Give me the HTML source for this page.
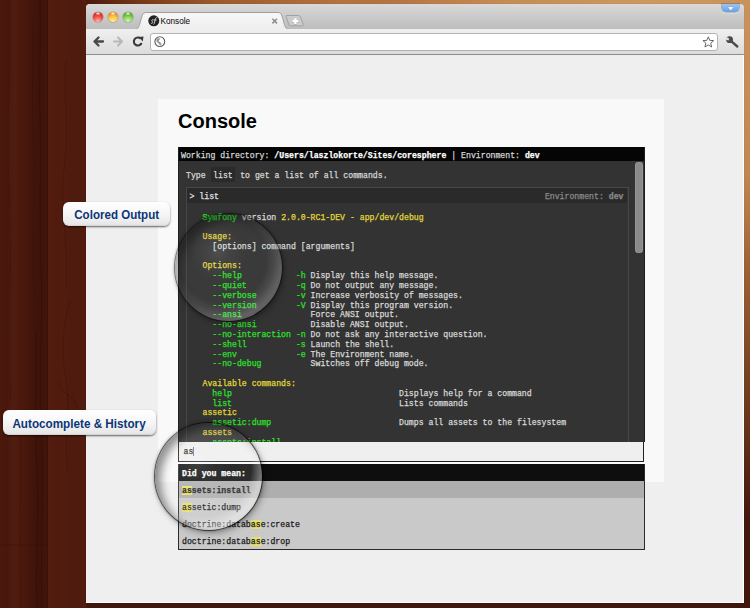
<!DOCTYPE html>
<html><head><meta charset="utf-8">
<style>
*{margin:0;padding:0;box-sizing:border-box}
html,body{width:750px;height:608px;overflow:hidden}
body{position:relative;background:#40180a;font-family:"Liberation Sans",sans-serif}
.a{position:absolute}
.wood{left:0;top:0;width:750px;height:608px;
 background:
  radial-gradient(ellipse 580px 560px at 660px -30px, rgba(208,154,98,1) 0%, rgba(192,134,80,1) 40%, rgba(150,92,50,1) 58%, rgba(112,60,30,.9) 80%, rgba(64,21,11,0) 100%),
  linear-gradient(90deg,rgba(0,0,0,0) 0,rgba(0,0,0,.05) 6px,rgba(255,255,255,.02) 14px,rgba(0,0,0,0) 22px,rgba(0,0,0,.12) 32px,rgba(0,0,0,.2) 40px,rgba(0,0,0,.12) 47px,rgba(0,0,0,0) 48px,rgba(0,0,0,.03) 58px,rgba(0,0,0,0) 64px,rgba(0,0,0,.06) 72px,rgba(0,0,0,0) 86px),
  linear-gradient(90deg,#4c180c 0,#4c180c 47px,#521c0e 48px,#521c0e 86px,#40150b 87px,#40150b 750px);}
.win{left:86px;top:4px;width:658px;height:599px;border-radius:4px 4px 0 0;background:#efefef;box-shadow:0 0 1px rgba(0,0,0,.3)}
.tabstrip{left:86px;top:4px;width:658px;height:25px;border-radius:4px 4px 0 0;background:linear-gradient(#d9d9d9,#bdbdbd)}
.light{width:10px;height:10px;border-radius:50%;top:11.5px}
.toolbar{left:86px;top:29px;width:658px;height:26px;background:linear-gradient(#f0f0f0,#dcdcdc);border-bottom:1px solid #8d8d8d}
.content{left:86px;top:55px;width:658px;height:548px;background:#efefef;border-right:1px solid #fff;border-bottom:1px solid #fff}
.card{left:158px;top:99px;width:506px;height:383px;background:#f9f9f9}
h1{position:absolute;left:178px;top:109px;font-size:20px;font-weight:bold;color:#000;line-height:24px}
.mono{font-family:"Liberation Mono",monospace;font-size:8.2px;white-space:pre;-webkit-text-stroke:0.25px currentColor}
.console{left:178px;top:147px;width:467px;height:295px;background:#333;overflow:hidden;border-left:1px solid #1e1e1e;border-right:1px solid #1e1e1e}
.chead{left:0;top:0;width:467px;height:14px;background:#050505;color:#d4d4d4;line-height:14px;padding-left:2px;padding-top:2px}
.chead b{color:#fff}
.inner{left:6.5px;top:40px;width:443px;height:300px;border:1.5px solid #474747;background:#333}
.ihead{left:0;top:0;width:440px;height:15px;background:#2a2a2a;color:#e0e0e0;line-height:15px;padding-top:1px}
.lines{left:16px;top:24.5px;line-height:9.8px;color:#d8d8d8}
.g{color:#2ae02a}.y{color:#e0d838}
.thumb{left:456px;top:15px;width:8px;height:91px;background:#8a8a8a;border-radius:2.5px;border:1px solid #959595}
.input{left:178px;top:442px;width:466px;height:20px;background:#efefef;border:1px solid #222;border-top:none}
.ac{left:178px;top:464px;width:467px;height:86px;background:#c9c9c9;border:1px solid #2a2a2a;border-top:none;overflow:hidden}
.achead{left:0;top:0;width:467px;height:17px;background:#0e0e0e;color:#fff;font-weight:bold;line-height:17px;padding-left:3px;padding-top:1px}
.row{left:0;width:466px;height:17px;line-height:17px;padding-left:3px;color:#1a1a1a;padding-top:1px}
.hl{background:#e8df6c;box-shadow:0 0 0 0.01px #e8df6c}
.pill{background:linear-gradient(#ffffff 0,#f6f6f6 50%,#e4e4e4 100%);border-radius:6px;box-shadow:0 1px 2px rgba(0,0,0,.6),inset 0 -1px 1px rgba(0,0,0,.08);color:#0b3677;font-weight:bold;font-size:13px;text-align:center}
.mag{border-radius:50%}
</style></head><body>
<div class="a wood"></div>
<svg class="a" style="left:0;top:0" width="86" height="608">
 <g fill="none" stroke="#1e0602" stroke-opacity=".25" stroke-width="0.8" opacity=".7">
  <path d="M40 0 C41 40 38 80 40 120 C42 160 39 200 41 260 C43 320 39 380 42 440 C44 500 40 560 42 608"/>
  <path d="M33 20 C34 60 31 90 33 130 C35 170 32 230 34 300"/>
  <path d="M36 330 C37 380 34 420 37 470 C39 520 35 570 37 608" stroke-opacity=".5"/>
  <path d="M9 0 C10 60 7 120 9 200 C11 260 8 330 10 400"/>
  <path d="M20 420 C22 470 19 520 21 608" stroke-opacity=".25"/>
  <path d="M66 60 C62 90 70 130 64 170 C60 200 68 240 66 290" stroke-opacity=".3"/>
  <path d="M70 300 C64 320 60 350 66 380 C72 410 62 440 68 470" stroke-opacity=".35"/>
  <path d="M58 380 C64 400 72 390 78 410" stroke-opacity=".35"/>
  <path d="M0 545 L47 545" stroke-opacity=".25"/>
  <path d="M47.5 0 V608" stroke-opacity=".5" stroke-width="1"/>
 </g>
</svg>
<div class="a" style="left:86px;top:0;width:664px;height:5px;background:linear-gradient(90deg,#4a1a0c 0,#7a3c18 60px,#9c5a2c 130px,#b47440 260px,rgba(190,130,75,0) 420px)"></div>
<div class="a win"></div>
<div class="a tabstrip"></div>
<div class="a light" style="left:93.3px;top:12px;width:9.6px;height:9.6px;box-shadow:0 0 0 0.5px rgba(120,0,0,.35);background:radial-gradient(ellipse 3px 2px at 50% 14%,rgba(255,255,255,.95) 0,rgba(255,255,255,0) 100%),radial-gradient(circle at 50% 95%,#ffb8b0 0,#f5524a 45%,#d42a22 75%,#8e1410 100%)"></div>
<div class="a light" style="left:108.2px;top:12px;width:9.6px;height:9.6px;box-shadow:0 0 0 0.5px rgba(120,60,0,.35);background:radial-gradient(ellipse 3px 2px at 50% 14%,rgba(255,255,255,.95) 0,rgba(255,255,255,0) 100%),radial-gradient(circle at 50% 95%,#fff0a0 0,#fcc848 45%,#e8901c 75%,#a85a08 100%)"></div>
<div class="a light" style="left:123.2px;top:12px;width:9.6px;height:9.6px;box-shadow:0 0 0 0.5px rgba(0,80,0,.35);background:radial-gradient(ellipse 3px 2px at 50% 14%,rgba(255,255,255,.95) 0,rgba(255,255,255,0) 100%),radial-gradient(circle at 50% 95%,#d8f8b0 0,#8cd458 45%,#58a830 75%,#2a6e10 100%)"></div>
<!-- tab -->
<svg class="a" style="left:134px;top:12px" width="160" height="18">
 <defs><linearGradient id="tg" x1="0" y1="0" x2="0" y2="1"><stop offset="0" stop-color="#f8f8f8"/><stop offset="1" stop-color="#eeeeee"/></linearGradient></defs>
 <path d="M0 17.5 C4 17.5 5 15 6 11 L8 4 C9 1 10 0.5 13 0.5 L143 0.5 C146 0.5 147 1 148 4 L150 11 C151 15 152 17.5 156 17.5 Z" fill="url(#tg)" stroke="#a0a0a0" stroke-width="1"/>
 <rect x="1" y="17" width="154" height="2" fill="#efefef"/>
</svg>
<svg class="a" style="left:0;top:0" width="750" height="60">
 <path d="M286.5 15.5 L298.5 15.5 C299.5 15.5 300 16 300.4 17 L303.4 24.6 C303.6 25.4 303.3 25.8 302.5 25.8 L290.3 25.8 C289.6 25.8 289.2 25.4 289 24.8 L286 16.4 C285.8 15.8 286 15.5 286.5 15.5 Z" fill="#cbcbcb" stroke="#a2a2a2" stroke-width="1"/>
 <path d="M292.5 21.2 H298.3 M295.4 18.3 V24.1" stroke="#8a8a8a" stroke-width="2.2" transform="translate(0 0.6)" opacity=".5"/>
 <path d="M292.5 21.2 H298.3 M295.4 18.3 V24.1" stroke="#fff" stroke-width="2.2"/>
 <path d="M272.4 18.8 L277 23.4 M277 18.8 L272.4 23.4" stroke="#8c8c8c" stroke-width="1.5"/>
</svg>
<svg class="a" style="left:147.5px;top:15.2px" width="12" height="12">
 <circle cx="5.8" cy="5.8" r="5.5" fill="#222"/>
 <path d="M3 8.2 C4 8.6 5 8 4.6 7 C4.2 6.2 3.4 5.8 4 5 C4.5 4.4 5.4 4.6 5.6 5.1" stroke="#ddd" stroke-width=".9" fill="none"/>
 <path d="M5.6 9.4 C6.6 8.8 6.8 6 7.2 4.2 C7.5 3 8.3 2.4 9.2 2.8 M5.8 5 H8.6" stroke="#ddd" stroke-width=".9" fill="none"/>
</svg>
<div class="a" style="left:160.5px;top:16.5px;font-size:8.2px;color:#111;line-height:10px;-webkit-text-stroke:0.05px #111">Konsole</div>
<div class="a" style="left:722.3px;top:4px;width:16.5px;height:8.2px;border-radius:0 0 4px 4px;background:linear-gradient(#9cc4f4,#6aa0e4);box-shadow:0 0 0 0.6px rgba(50,80,120,.55),0 1px 0 0.5px rgba(255,255,255,.5)"></div>
<svg class="a" style="left:727px;top:6px" width="8" height="6"><path d="M0.8 1 H6.6 L3.7 4.4 Z" fill="#fff" stroke="#4a6a90" stroke-width=".3" stroke-opacity=".5"/></svg>
<div class="a toolbar"></div>
<!-- back fwd reload -->
<svg class="a" style="left:90px;top:35px" width="60" height="14">
 <path d="M4.5 6.5 H13 M4.5 6.5 L8.5 2.5 M4.5 6.5 L8.5 10.5" stroke="#484848" stroke-width="2.3" fill="none" stroke-linecap="round" stroke-linejoin="round"/>
 <path d="M24 6.5 H32 M32 6.5 L28 2.5 M32 6.5 L28 10.5" stroke="#b8b8b8" stroke-width="2.1" fill="none" stroke-linecap="round" stroke-linejoin="round"/>
 <path d="M50.6 3.6 A4 4 0 1 0 51.6 8" stroke="#3a3a3a" stroke-width="2.1" fill="none"/>
 <path d="M48.5 2 L53.5 1.5 L52.8 6.5 Z" fill="#3a3a3a"/>
</svg>
<div class="a" style="left:150px;top:33px;width:568px;height:18px;background:#fff;border:1px solid #b2b2b2;border-radius:3px"></div>
<svg class="a" style="left:0;top:0" width="200" height="60">
 <circle cx="159.8" cy="41.6" r="4.9" fill="#fff" stroke="#5a5a5a" stroke-width="1.1"/>
 <path d="M157 38.6 C158 38 160 38.3 160.4 39 C159.6 39.8 158.6 40 158.8 41 C159.2 42 160.2 42.2 161 43 C161.8 43.8 161.5 45 160.6 45.6 C159.6 45.4 159.2 44.4 158.6 43.6 C157.8 42.6 156.6 42.2 156.4 41 C156.3 40 156.5 39.2 157 38.6 Z" fill="#9a9a9a"/>
</svg>
<svg class="a" style="left:702px;top:35.5px" width="13" height="13">
 <path d="M6.3 0.8 L7.8 4.4 L11.7 4.6 L8.7 7.1 L9.7 11 L6.3 8.9 L2.9 11 L3.9 7.1 L0.9 4.6 L4.8 4.4 Z" fill="#fff" stroke="#6a6a6a" stroke-width="1" stroke-linejoin="round"/>
</svg>
<svg class="a" style="left:700px;top:30px" width="44" height="24">
 <path d="M31.2 11.2 L37.3 16.5" stroke="#4a4a4a" stroke-width="2.4" stroke-linecap="round"/>
 <circle cx="29.6" cy="9.7" r="3.4" fill="#4a4a4a"/>
 <path d="M25.6 6.6 L29.2 8.6 L28.6 10.6 L25.4 9.6 Z" fill="#e2e2e2"/>
</svg>
<div class="a content"></div>
<div class="a card"></div>
<h1>Console</h1>
<div class="a console mono">
 <div class="a chead">Working directory: <b>/Users/laszlokorte/Sites/coresphere</b> | Environment: <b>dev</b></div>
 <div class="a" style="left:7px;top:19px;color:#d8d8d8;line-height:15px;padding-top:2px">Type <span style="display:inline-block;background:#2a2a2a;padding:0 2.5px;height:15px;vertical-align:top;margin-top:-1px;line-height:15px;padding-top:1px">list</span> to get a list of all commands.</div>
 <div class="a inner">
  <div class="a ihead"><span style="position:absolute;left:3px">&gt; list</span><span style="position:absolute;right:3px;color:#8a8a8a">Environment: <b>dev</b></span></div>
  <div class="a lines"><span class="g">Symfony</span> version <span class="y">2.0.0-RC1-DEV - app/dev/debug</span>

<span class="y">Usage:</span>
  [options] command [arguments]

<span class="y">Options:</span>
  <span class="g">--help</span>           <span class="g">-h</span> Display this help message.
  <span class="g">--quiet</span>          <span class="g">-q</span> Do not output any message.
  <span class="g">--verbose</span>        <span class="g">-v</span> Increase verbosity of messages.
  <span class="g">--version</span>        <span class="g">-V</span> Display this program version.
  <span class="g">--ansi</span>              Force ANSI output.
  <span class="g">--no-ansi</span>           Disable ANSI output.
  <span class="g">--no-interaction</span> <span class="g">-n</span> Do not ask any interactive question.
  <span class="g">--shell</span>          <span class="g">-s</span> Launch the shell.
  <span class="g">--env</span>            <span class="g">-e</span> The Environment name.
  <span class="g">--no-debug</span>          Switches off debug mode.

<span class="y">Available commands:</span>
  <span class="g">help</span>                                  Displays help for a command
  <span class="g">list</span>                                  Lists commands
<span class="y">assetic</span>
  <span class="g">assetic:dump</span>                          Dumps all assets to the filesystem
<span class="y">assets</span>
  <span class="g">assets:install</span></div>
 </div>
 <div class="a thumb"></div>
</div>
<div class="a input mono" style="color:#222;line-height:20px;padding-left:4.5px;padding-top:0px">as<span style="display:inline-block;width:1.2px;height:9px;background:#777;vertical-align:-1.5px;margin-left:-0.6px"></span></div>
<div class="a ac mono">
 <div class="a achead">Did you mean:</div>
 <div class="a row" style="top:17px;background:#aeaeae;font-weight:bold"><span class="hl">as</span>sets:install</div>
 <div class="a row" style="top:34px"><span class="hl">as</span>setic:dump</div>
 <div class="a row" style="top:51px">doctrine:datab<span class="hl">as</span>e:create</div>
 <div class="a row" style="top:68px">doctrine:datab<span class="hl">as</span>e:drop</div>
</div>
<div class="a pill" style="left:63px;top:202px;width:107px;height:24px;line-height:25px"><span style="display:inline-block;transform:scaleX(0.89)">Colored Output</span></div>
<div class="a pill" style="left:3px;top:410px;width:153px;height:25px;line-height:27px"><span style="display:inline-block;transform:scaleX(0.9)">Autocomplete &amp; History</span></div>
<div class="a mag" style="left:175px;top:213.5px;width:107px;height:107px;background:radial-gradient(circle 60px at 47px 45px,rgba(255,255,255,0) 44px,rgba(255,255,255,.08) 52px,rgba(255,255,255,.2) 60px),radial-gradient(circle at 40% 36%,rgba(255,255,255,0.1) 0,rgba(255,255,255,0.05) 12%,rgba(255,255,255,0) 30%),rgba(255,255,255,0.035);box-shadow:0 0 0 1px rgba(0,0,0,.4),0 0 3px 1px rgba(0,0,0,.25),2px 3px 6px rgba(0,0,0,.3),inset 5px 6px 9px rgba(0,0,0,.35)"></div>
<div class="a mag" style="left:155px;top:423px;width:107px;height:107px;background:radial-gradient(circle 58px at 47px 45px,rgba(255,255,255,0) 49px,rgba(255,255,255,.35) 59px),radial-gradient(circle at 40% 36%,rgba(255,255,255,0.1) 0,rgba(255,255,255,0.05) 12%,rgba(255,255,255,0) 30%),rgba(255,255,255,0.12);box-shadow:0 0 0 1px rgba(0,0,0,.55),0 0 3px 1px rgba(0,0,0,.3),2px 3px 7px rgba(0,0,0,.35),inset 6px 4px 9px rgba(0,0,0,.42)"></div>
</body></html>
